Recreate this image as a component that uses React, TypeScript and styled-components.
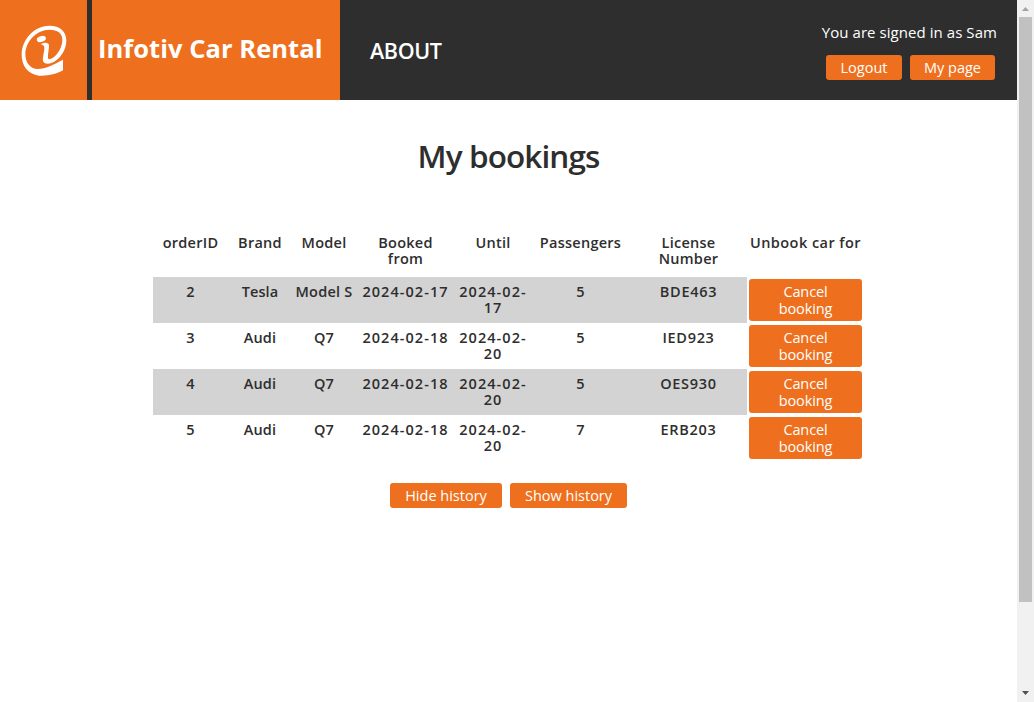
import React from "react";
import styled, { createGlobalStyle } from "styled-components";

const ORANGE = "#ee701e";
const DARK = "#2e2e2e";

const GlobalStyle = createGlobalStyle`
  * { box-sizing: border-box; }
  body {
    margin: 0;
    background: #fff;
    color: ${DARK};
    font-family: "Trebuchet MS", "Open Sans", "Noto Sans", sans-serif;
    overflow: hidden;
  }
`;

const Page = styled.div`
  display: grid;
  grid-template-columns: 1fr 17px;
  height: 702px;
`;

const Content = styled.div`
  display: flex;
  flex-direction: column;
`;

const Header = styled.header`
  display: flex;
  height: 100px;
  background: ${DARK};
  color: #fff;
`;

const LogoBox = styled.div`
  width: 87.4px;
  margin-right: 4.6px;
  background: ${ORANGE};
  svg { display: block; }
`;

const Title = styled.h1`
  width: 248px;
  margin: 0;
  padding: 30px 0 0 6px;
  background: ${ORANGE};
  font-size: 25.5px;
  font-weight: 700;
  line-height: 36px;
  letter-spacing: 0.05px;
  white-space: nowrap;
`;

const About = styled.div`
  padding: 36px 0 0 30px;
  font-size: 21.5px;
  font-weight: 600;
  line-height: 30px;
  letter-spacing: -0.35px;
`;

const Account = styled.div`
  margin-left: auto;
  padding: 22px 20px 0 0;
  font-size: 15px;
  line-height: 20px;
  letter-spacing: 0.06px;
  text-align: right;
  white-space: nowrap;
`;

const ButtonRow = styled.div<{ $top: number; $right?: number }>`
  display: flex;
  justify-content: ${(p) => (p.$right === undefined ? "center" : "flex-end")};
  gap: 8px;
  margin-top: ${(p) => p.$top}px;
  padding-right: ${(p) => p.$right ?? 0}px;
`;

const Button = styled.button<{ $width: number; $tall?: boolean }>`
  width: ${(p) => p.$width}px;
  height: ${(p) => (p.$tall ? 42 : 25)}px;
  padding: 0 ${(p) => (p.$tall ? 24 : 0)}px;
  border: 0;
  border-radius: 3px;
  background: ${ORANGE};
  color: #fff;
  font-family: inherit;
  font-size: 14.5px;
  line-height: 17px;
  letter-spacing: ${(p) => (p.$tall ? -0.1 : 0)}px;
  white-space: ${(p) => (p.$tall ? "normal" : "nowrap")};
`;

const Heading = styled.h2`
  margin: 34px 0 0;
  font-size: 31.5px;
  font-weight: 600;
  line-height: 44px;
  letter-spacing: -0.9px;
  text-align: center;
`;

const Table = styled.table`
  width: 711px;
  margin: 55px 0 0 153px;
  border-collapse: collapse;
  table-layout: fixed;
  font-size: 14.5px;
  line-height: 16px;
`;

const Th = styled.th`
  height: 44px;
  padding: 2px 2px 0;
  font-weight: 600;
  letter-spacing: 0.27px;
  vertical-align: top;

  &:last-child { letter-spacing: 0.45px; }
`;

const Row = styled.tr<{ $shaded: boolean }>`
  height: 46px;
  td:not(:last-child) {
    background: ${(p) => (p.$shaded ? "#d3d3d3" : "transparent")};
  }
`;

const Td = styled.td<{ $spacing: number }>`
  padding: 7px 2px 0;
  font-weight: 600;
  letter-spacing: ${(p) => p.$spacing}px;
  text-align: center;
  vertical-align: top;
`;

const ActionCell = styled.td`
  padding: 2px;
  button { display: block; }
`;

const Scrollbar = styled.div`
  display: flex;
  flex-direction: column;
  justify-content: space-between;
  align-items: center;
  background: #f1f1f1;
  svg { display: block; }
`;

const Thumb = styled.div`
  width: 13px;
  height: 585px;
  margin-bottom: auto;
  background: #c1c1c1;
`;

const columns = [
  { label: "orderID", width: 75 },
  { label: "Brand", width: 64 },
  { label: "Model", width: 64 },
  { label: <>Booked<br />from</>, width: 99 },
  { label: "Until", width: 76 },
  { label: "Passengers", width: 99 },
  { label: <>License<br />Number</>, width: 117 },
  { label: "Unbook car for", width: 117 },
];

const cellSpacing = [0.1, 0.1, 0.25, 1.05, 1.05, 0.1, 0.7];

const bookings = [
  ["2", "Tesla", "Model S", "2024-02-17", "17", "5", "BDE463"],
  ["3", "Audi", "Q7", "2024-02-18", "20", "5", "IED923"],
  ["4", "Audi", "Q7", "2024-02-18", "20", "5", "OES930"],
  ["5", "Audi", "Q7", "2024-02-18", "20", "7", "ERB203"],
];

const Logo = () => (
  <svg width="87" height="100" viewBox="0 0 261 300" fill="none">
    <path
      fill="#fff"
      fillRule="evenodd"
      d="M189 179V211C169 222 142 229 117 227C84 223 64 197 65 162C66 119 101 78 148 77C180 77 199 94 199 122C198 159 169 190 143 191C131 191 127 184 129 172L133 148C134 139 131 134 122 133C131 127 147 126 147 137C147 149 143 162 144 174C147 188 187 158 187 119C187 99 173 89 148 89C110 90 78 122 76 161C76 187 89 204 110 207C137 208 164 192 189 179Z"
    />
    <ellipse cx="124" cy="117" rx="14" ry="8.5" transform="rotate(-16 124 117)" fill="#fff" />
  </svg>
);

export default function App() {
  return (
    <>
      <GlobalStyle />
      <Page>
        <Content>
          <Header>
            <LogoBox><Logo /></LogoBox>
            <Title>Infotiv Car Rental</Title>
            <About>ABOUT</About>
            <Account>
              You are signed in as Sam
              <ButtonRow $top={13} $right={2}>
                <Button $width={76}>Logout</Button>
                <Button $width={85}>My page</Button>
              </ButtonRow>
            </Account>
          </Header>
          <Heading>My bookings</Heading>
          <Table>
            <colgroup>
              {columns.map((c, i) => <col key={i} width={c.width} />)}
            </colgroup>
            <thead>
              <tr>{columns.map((c, i) => <Th key={i}>{c.label}</Th>)}</tr>
            </thead>
            <tbody>
              {bookings.map((b, r) => (
                <Row key={b[0]} $shaded={r % 2 === 0}>
                  {b.map((v, i) => (
                    <Td key={i} $spacing={cellSpacing[i]}>
                      {i === 4 ? <>2024-02-<br />{v}</> : v}
                    </Td>
                  ))}
                  <ActionCell><Button $width={113} $tall>Cancel booking</Button></ActionCell>
                </Row>
              ))}
            </tbody>
          </Table>
          <ButtonRow $top={22}>
            <Button $width={112}>Hide history</Button>
            <Button $width={117}>Show history</Button>
          </ButtonRow>
        </Content>
        <Scrollbar>
          <svg width="17" height="17"><path d="M5 11h7L8.5 7z" fill="#a3a3a3" /></svg>
          <Thumb />
          <svg width="17" height="17"><path d="M5 6h7L8.5 10z" fill="#505050" /></svg>
        </Scrollbar>
      </Page>
    </>
  );
}
